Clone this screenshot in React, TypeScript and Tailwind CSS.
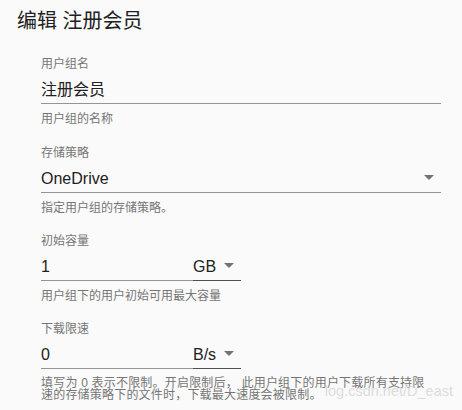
import React from "react";

const Arrow = () => (
  <svg width="24" height="24" viewBox="0 0 24 24" className="absolute right-0 top-[2px]">
    <path d="M7 10l5 5 5-5z" fill="rgba(0,0,0,0.54)" />
  </svg>
);

const Label = ({ children }: { children: React.ReactNode }) => (
  <div className="text-[12px] leading-[12px] text-[#757575]">{children}</div>
);

const Helper = ({ children }: { children: React.ReactNode }) => (
  <div className="mt-[9px] text-[12px] leading-[12px] text-[#757575]">{children}</div>
);

const UnitField = ({ label, value, unit, helper }: { label: string; value: string; unit: string; helper: React.ReactNode }) => (
  <div>
    <Label>{label}</Label>
    <div className="mt-[4px] flex w-[200px]">
      <div className="flex-1 pt-[6px] pb-[4px] border-b border-[#949494] text-[16px] leading-[19px] text-[#212121]">{value}</div>
      <div className="relative w-[48px] pt-[6px] pb-[4px] border-b border-[#505050] text-[16px] leading-[19px] text-[#212121]">
        {unit}
        <Arrow />
      </div>
    </div>
    {helper}
  </div>
);

export default function App() {
  return (
    <div className="relative w-[462px] h-[410px] overflow-hidden bg-[#fafafa] font-['Liberation_Sans','Noto_Sans_CJK_SC',sans-serif]">
      <div className="pl-[17px] pt-[11px] text-[20px] leading-[20px] text-[#212121]">编辑 注册会员</div>
      <div className="ml-[41px] mt-[27px] w-[400px]">
        <div className="h-[89px]">
          <Label>用户组名</Label>
          <div className="mt-[4px] pt-[6px] pb-[4px] border-b border-[#949494] text-[16px] leading-[19px] text-[#212121]">注册会员</div>
          <Helper>用户组的名称</Helper>
        </div>
        <div className="h-[88px]">
          <Label>存储策略</Label>
          <div className="relative mt-[4px] pt-[6px] pb-[4px] border-b border-[#949494] text-[16px] leading-[19px] text-[#212121]">
            OneDrive
            <Arrow />
          </div>
          <Helper>指定用户组的存储策略。</Helper>
        </div>
        <div className="h-[88px]">
          <UnitField label="初始容量" value="1" unit="GB" helper={<Helper>用户组下的用户初始可用最大容量</Helper>} />
        </div>
        <UnitField
          label="下载限速"
          value="0"
          unit="B/s"
          helper={
            <div className="mt-[8px] text-[12px] leading-[12px] tracking-[0.2px] text-[#757575] whitespace-nowrap">
              填写为 0 表示不限制。开启限制后，{"\u00a0"}此用户组下的用户下载所有支持限
              <br />
              速的存储策略下的文件时，下载最大速度会被限制。
            </div>
          }
        />
      </div>
      <div className="absolute right-[9px] top-[384px] text-[14.5px] leading-[15px] text-[#d4d4d4]/80 whitespace-nowrap">
        log.csdn.net/D_east
      </div>
    </div>
  );
}
